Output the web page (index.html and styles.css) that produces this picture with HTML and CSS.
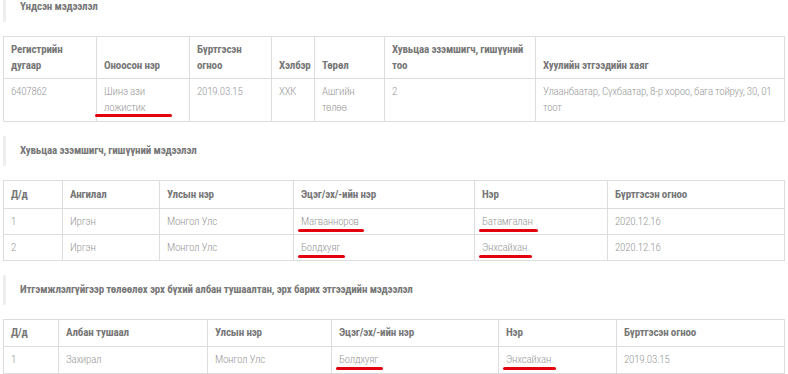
FILE: index.html
```html
<!DOCTYPE html>
<html lang="mn">
<head>
    <meta charset="UTF-8">
    <title>Компанийн мэдээлэл</title>
    <link rel="stylesheet" href="styles.css">
</head>
<body>
    <div class="page">
        <div class="section-title">Үндсэн мэдээлэл</div>
        <table class="info-table t-main">
            <thead>
                <tr>
                    <th>Регистрийн дугаар</th>
                    <th>Оноосон нэр</th>
                    <th>Бүртгэсэн огноо</th>
                    <th>Хэлбэр</th>
                    <th>Төрөл</th>
                    <th>Хувьцаа эзэмшигч, гишүүний тоо</th>
                    <th>Хуулийн этгээдийн хаяг</th>
                </tr>
            </thead>
            <tbody>
                <tr>
                    <td>6407862</td>
                    <td>Шинэ ази <span class="mark mark-wide">ложистик</span></td>
                    <td>2019.03.15</td>
                    <td>ХХК</td>
                    <td>Ашгийн төлөө</td>
                    <td>2</td>
                    <td>Улаанбаатар, Сүхбаатар, 8-р хороо, бага тойруу, 30, 01 тоот</td>
                </tr>
            </tbody>
        </table>

        <div class="section-title">Хувьцаа эзэмшигч, гишүүний мэдээлэл</div>
        <table class="info-table t-holders">
            <thead>
                <tr>
                    <th>Д/д</th>
                    <th>Ангилал</th>
                    <th>Улсын нэр</th>
                    <th>Эцэг/эх/-ийн нэр</th>
                    <th>Нэр</th>
                    <th>Бүртгэсэн огноо</th>
                </tr>
            </thead>
            <tbody>
                <tr>
                    <td>1</td>
                    <td>Иргэн</td>
                    <td>Монгол Улс</td>
                    <td><span class="mark">Магванноров</span></td>
                    <td><span class="mark">Батамгалан</span></td>
                    <td>2020.12.16</td>
                </tr>
                <tr>
                    <td>2</td>
                    <td>Иргэн</td>
                    <td>Монгол Улс</td>
                    <td><span class="mark">Болдхуяг</span></td>
                    <td><span class="mark">Энхсайхан</span></td>
                    <td>2020.12.16</td>
                </tr>
            </tbody>
        </table>

        <div class="section-title">Итгэмжлэлгүйгээр төлөөлөх эрх бүхий албан тушаалтан, эрх барих этгээдийн мэдээлэл</div>
        <table class="info-table t-officials">
            <thead>
                <tr>
                    <th>Д/д</th>
                    <th>Албан тушаал</th>
                    <th>Улсын нэр</th>
                    <th>Эцэг/эх/-ийн нэр</th>
                    <th>Нэр</th>
                    <th>Бүртгэсэн огноо</th>
                </tr>
            </thead>
            <tbody>
                <tr>
                    <td>1</td>
                    <td>Захирал</td>
                    <td>Монгол Улс</td>
                    <td><span class="mark">Болдхуяг</span></td>
                    <td><span class="mark">Энхсайхан</span></td>
                    <td>2019.03.15</td>
                </tr>
            </tbody>
        </table>
    </div>
</body>
</html>
```
FILE: styles.css
```css
body { margin: 0; background: #fff; font-family: Roboto, 'DejaVu Sans Condensed', sans-serif; font-stretch: 75%; font-size: 11px; color: #999; overflow: hidden; }
.page { margin-top: -8px; padding: 0 3px; }
.section-title { height: 30px; line-height: 30px; border-left: 3px solid #eee; padding-left: 14px; font-weight: bold; color: #777; letter-spacing: -0.15px; margin-bottom: 14px; }
.info-table { width: 782px; border-collapse: collapse; table-layout: fixed; margin-bottom: 14px; }
.info-table th, .info-table td { box-sizing: border-box; border: 1px solid #ddd; padding: 5px 7px; line-height: 16px; text-align: left; }
.info-table th { vertical-align: bottom; font-weight: bold; color: #777; letter-spacing: -0.15px; }
.info-table td { vertical-align: top; color: #999; font-weight: 300; letter-spacing: -0.25px; }
.t-main th { padding-bottom: 4px; }
.t-holders th { padding-top: 6px; padding-bottom: 5px; }
.t-holders td { padding-bottom: 4px; }

.t-main th:nth-child(1) { width: 93px; }
.t-main th:nth-child(2) { width: 93px; }
.t-main th:nth-child(3) { width: 82px; }
.t-main th:nth-child(4) { width: 43px; }
.t-main th:nth-child(5) { width: 70px; }
.t-main th:nth-child(6) { width: 151px; }

.t-holders th:nth-child(1) { width: 59px; }
.t-holders th:nth-child(2) { width: 97px; }
.t-holders th:nth-child(3) { width: 134px; }
.t-holders th:nth-child(4) { width: 181px; }
.t-holders th:nth-child(5) { width: 133px; }

.t-officials th:nth-child(1) { width: 55px; }
.t-officials th:nth-child(2) { width: 149px; }
.t-officials th:nth-child(3) { width: 124px; }
.t-officials th:nth-child(4) { width: 167px; }
.t-officials th:nth-child(5) { width: 118px; }

/* red hand-drawn underline */
.mark { position: relative; }
.mark::after { content: ''; position: absolute; left: -3px; right: -5px; bottom: -4px; height: 3px; background: #e3000f; border-radius: 2px; }
.mark-wide::after { left: -9px; right: -26px; bottom: -3px; }
```
